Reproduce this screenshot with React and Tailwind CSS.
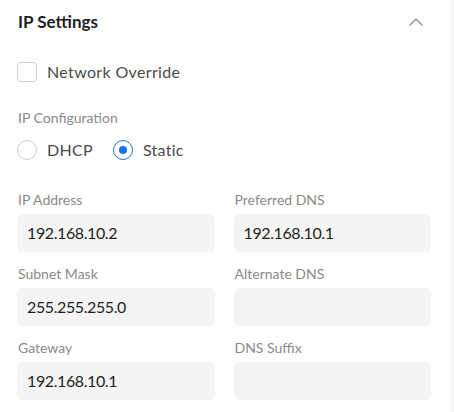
import { ChevronUp } from 'lucide-react';

const fields = [
  { label: 'IP Address', value: '192.168.10.2' },
  { label: 'Preferred DNS', value: '192.168.10.1' },
  { label: 'Subnet Mask', value: '255.255.255.0' },
  { label: 'Alternate DNS', value: '' },
  { label: 'Gateway', value: '192.168.10.1' },
  { label: 'DNS Suffix', value: '' },
];

function Radio({ checked, label }) {
  return (
    <label className="flex items-center gap-[10px] h-5">
      <span
        className={`w-5 h-5 rounded-full border flex items-center justify-center bg-white ${
          checked ? 'border-[#1a73e8]' : 'border-[#cfcfcf]'
        }`}
      >
        {checked && <span className="w-2 h-2 rounded-full bg-[#1a73e8]" />}
      </span>
      <span className="text-[16px] leading-5 tracking-[0.3px] text-[#4a4a4a]">{label}</span>
    </label>
  );
}

function Field({ label, value }) {
  return (
    <div className="flex flex-col">
      <span className="text-[14px] leading-[16px] text-[#8a8a8a] mb-[6px] pl-[1px]">{label}</span>
      <div className="h-[38px] rounded-md bg-[#f4f4f4] px-[10px] flex items-center text-[16px] tracking-[-0.4px] text-[#1f1f1f]">
        {value}
      </div>
    </div>
  );
}

export default function App() {
  return (
    <div className="w-[454px] h-[412px] flex bg-white overflow-hidden" style={{ fontFamily: 'Lato, "Noto Sans", sans-serif' }}>
      <div className="flex-1 pl-[17px] pr-[20px] pt-[11px]">
        <div className="flex items-center justify-between h-[22px]">
          <h2 className="text-[17px] font-bold text-[#1f1f1f] pl-[1px]">IP Settings</h2>
          <ChevronUp className="w-6 h-6 text-[#8a8f99] mr-[3px]" strokeWidth={1.25} />
        </div>

        <label className="flex items-center gap-[10px] h-5 mt-[29px]">
          <span className="w-5 h-5 rounded-[4px] border border-[#cfcfcf] bg-white" />
          <span className="text-[16px] leading-5 tracking-[0.35px] text-[#4a4a4a]">Network Override</span>
        </label>

        <div className="mt-[28px] text-[14px] leading-[16px] text-[#8a8a8a] pl-[1px]">IP Configuration</div>
        <div className="flex items-center gap-[20px] mt-[14px]">
          <Radio label="DHCP" />
          <Radio checked label="Static" />
        </div>

        <div className="grid grid-cols-2 gap-x-[19px] gap-y-[14px] mt-[32px]">
          {fields.map((f) => (
            <Field key={f.label} label={f.label} value={f.value} />
          ))}
        </div>
      </div>
      <div className="w-[3px] bg-[#f7f7f7]" />
    </div>
  );
}
